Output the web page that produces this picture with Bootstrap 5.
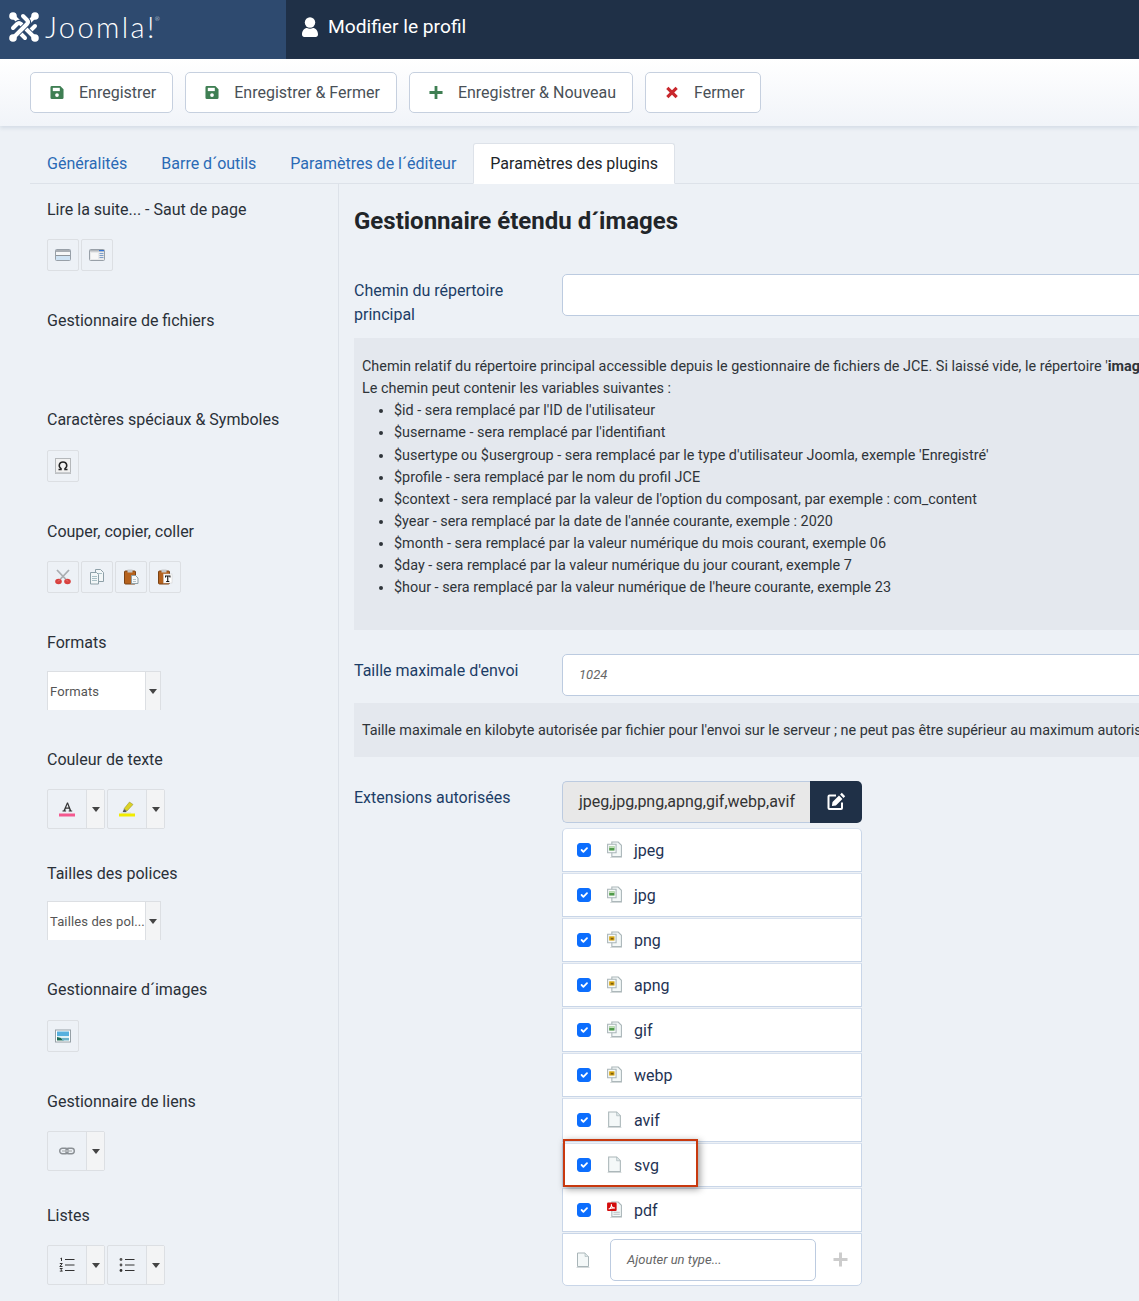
<!DOCTYPE html>
<html lang="fr">
<head>
<meta charset="utf-8">
<title>Modifier le profil</title>
<link href="https://cdn.jsdelivr.net/npm/bootstrap@5.3.0/dist/css/bootstrap.min.css" rel="stylesheet">
<style>
html,body{height:1301px;overflow:hidden}
body{background:#edf1f6;font-family:Roboto,"Liberation Sans",sans-serif;font-size:16px;color:#212529;position:relative}
.top-bar{height:59px;background:#1f3047;color:#fff}
.brand-box{width:286px;height:59px;background:#2e4a6f;padding:0 0 6px 9px}
.title-box{height:59px;padding:0 0 6px 16px}
.brand-word{font-family:Lato,"Liberation Sans",sans-serif;font-weight:300;font-size:29px;letter-spacing:2.4px;line-height:1;margin-left:6px;margin-top:-1px}
.brand-r{font-size:6px;letter-spacing:0;position:relative;top:4px;left:-2px;vertical-align:top}
.page-name{font-size:19.2px;margin-left:10px;margin-top:2px}
.tool-bar{height:67px;background:linear-gradient(#fff,#f1f4f9);box-shadow:0 2px 4px rgba(120,140,170,.22);padding:13px 0 0 30px;gap:12px;position:relative}
.tool-btn{height:41px;border:1px solid #c6d0df;border-radius:5px;background:#fff;color:#495057;font-size:16px;padding:0 16px 0 19px;display:flex;align-items:center;gap:15px}
.tool-btn:last-child{padding-right:15px}
.tool-btn svg{width:14px;height:15px;flex:none}
.tab-strip{padding:17px 0 0 0;margin-left:30px;border-bottom:1px solid #dde2e9;height:58px}
.tab-strip .nav-link{color:#2a6ab5;padding:8px 16px;height:41px;line-height:24px;border-radius:3px 3px 0 0;margin-bottom:-1px}
.tab-strip .nav-link.active{color:#212529;background:#fff;border-color:#dde2e9 #dde2e9 #fff}
.two-pane{height:1117px;padding-left:30px}
.side-pane{width:309px;flex:none;border-right:1px solid #dde2e9;padding:13px 0 0 17px}
.g-label{line-height:26px;height:24px;color:#2a3038}
.g99{height:99px}.g111{height:111px}.g112{height:112px}.g114{height:114px}.g116{height:116px}.g117{height:117px}
.tb-line{display:flex;gap:2px;margin-top:18px}
.tb-line.up1{margin-top:19px}
.tb-line.dn1{margin-top:17px}
.tb-line.dn2{margin-top:16px}
.ed-btn{width:32px;height:32px;border:1px solid #dcdfe3;border-radius:2px;display:flex;align-items:center;justify-content:center}
.ed-btn svg{width:16px;height:16px}
.split-btn{height:40px;border:1px solid #dcdfe3;border-radius:2px;display:flex}
.split-main{width:38px;display:flex;align-items:center;justify-content:center}
.split-main svg{width:16px;height:16px}
.split-arrow{width:18px;border-left:1px solid #dcdfe3;background:#f3f4f5;display:flex;align-items:center;justify-content:center}
.caret-d{width:0;height:0;border-left:4px solid transparent;border-right:4px solid transparent;border-top:5px solid #444}
.mce-select{width:114px;height:39px;display:flex;border-top:1px solid #dcdfe3;border-left:1px solid #dcdfe3;border-right:1px solid #dcdfe3;background:#fff;font-size:13px;letter-spacing:.12px;color:#555}
.mce-val{flex:1;padding:0 0 0 2px;line-height:40px;white-space:nowrap}
.mce-arrow{width:15px;border-left:1px solid #dcdfe3;background:#f3f4f5;display:flex;align-items:flex-start;justify-content:center;padding-top:17px}
.main-pane{padding:0 0 0 15px;width:1400px;flex:none}
.main-title{font-size:24px;font-weight:700;line-height:29px;margin:23px 0 38px;color:#212529}
.field-line{display:flex}
.field-label{width:208px;flex:none;color:#1c3d66;line-height:24px;padding-top:5px}
.wide-input{width:800px;height:42px;border:1px solid #bccbe0;border-radius:5px;background:#fff;font-style:italic;font-size:13px;color:#666;padding:0 16px;display:flex;align-items:center}
.help-box{background:#e4e8ee;width:1000px;padding:18px 8px 30px;font-size:14.4px;line-height:22.14px;white-space:nowrap;color:#2f3439;margin:11px 0 24px}
.help-box ul{margin:0;padding-left:32px}
.help-box.one{padding:17px 8px 15px;margin:7px 0 24px}
.ext-col{width:300px;flex:none}
.ext-group{height:42px;margin-bottom:5px}
.ext-value{flex:1;background:#e8e8e8;border:1px solid #bccbe0;border-right:0;border-radius:5px 0 0 5px;padding-left:16px;line-height:40px;color:#333}
.ext-edit{width:52px;background:#1f3047;border-radius:0 5px 5px 0;display:flex;align-items:center;justify-content:center}
.ext-edit svg{width:19px;height:19px}
.ext-item{height:44px;background:#fff;border:1px solid #c9d6e8;border-top-color:#d8e1ee;margin-bottom:1px;display:flex;align-items:center;padding-left:14px;color:#1f3354}
.ext-item:first-child{border-radius:5px 5px 0 0}
.ext-item .form-check-input{width:14px;height:14px;margin:0;flex:none;border-radius:3px}
.ext-item svg{width:17px;height:17px;margin-left:15px;margin-right:11px;flex:none}
.ext-name{margin-top:2px}
.ext-add{height:53px;background:#fff;border:1px solid #c9d6e8;border-radius:0 0 5px 5px;display:flex;align-items:center;padding:1px 0 0 12px;margin-top:1px}
.ext-add svg.pg{width:16px;height:16px;flex:none}
.ext-add .add-input{width:206px;height:42px;margin-left:19px;border:1px solid #bccbe0;border-radius:5px;font-style:italic;font-size:13px;color:#666;padding:0 16px;display:flex;align-items:center}
.ext-add svg.pl{width:15px;height:15px;margin-left:17px;flex:none}
.mark-box{position:absolute;left:563px;top:1139px;width:135px;height:48px;border:2px solid #c8390f;box-shadow:2px 2px 7px rgba(0,0,0,.4);pointer-events:none}
</style>
</head>
<body>
<svg class="d-none" xmlns="http://www.w3.org/2000/svg">
<defs>
<symbol id="i-save" viewBox="0 0 15 15"><path fill="#3f7f53" d="M2 0.5h9l3.500 3.500v9a1.500 1.500 0 0 1-1.500 1.500H2a1.500 1.500 0 0 1-1.500-1.500V2A1.500 1.500 0 0 1 2 .5z"/><rect x="3" y="2.500" width="7.500" height="3.500" fill="#fff"/><circle cx="7.500" cy="10.300" r="2" fill="#fff"/></symbol>
<symbol id="i-plus" viewBox="0 0 15 15"><path fill="#3f7f53" d="M6 .5h3v5.500h5.500v3H9v5.500H6V9H.5V6H6z"/></symbol>
<symbol id="i-x" viewBox="0 0 15 15"><path stroke="#c9282d" stroke-width="3.400" fill="none" d="M2.500 2.500l10 10m0-10l-10 10"/></symbol>
<symbol id="i-page" viewBox="0 0 16 16"><path fill="#f4f8f8" stroke="#a9b5b8" d="M2.500 1h7.500l3.500 3.500V14.500H2.500z"/><path fill="#dbe5e6" stroke="#a9b5b8" stroke-width=".6" d="M10 1v3.500h3.500"/><rect x="1.500" y="15" width="13" height="1" fill="#d4d9da"/></symbol>
<symbol id="i-img" viewBox="0 0 16 16"><path fill="#f4f8f8" stroke="#a9b5b8" d="M5.500 1h6l3 3v10.500h-9z"/><path fill="#f7fafa" stroke="#a9b5b8" d="M1.500 3h8v8h-8z"/><rect x="3" y="5" width="5" height="4" fill="#4f9a4a"/><rect x="3" y="5" width="5" height="1.500" fill="#cfe6c4"/><rect x="4" y="15" width="11" height="1" fill="#d4d9da"/></symbol>
<symbol id="i-imgy" viewBox="0 0 16 16"><path fill="#f4f8f8" stroke="#a9b5b8" d="M5.500 1h6l3 3v10.500h-9z"/><path fill="#f7fafa" stroke="#a9b5b8" d="M1.500 3h8v8h-8z"/><rect x="3" y="5" width="5" height="4" fill="#d6a511"/><rect x="4.500" y="6.500" width="2.500" height="1.500" fill="#7a5a10"/><rect x="4" y="15" width="11" height="1" fill="#d4d9da"/></symbol>
<symbol id="i-pdf" viewBox="0 0 16 16"><path fill="#f4f8f8" stroke="#a9b5b8" d="M5.500 1h6l3 3v10.500h-9z"/><path stroke="#b8c0c2" d="M7 10.500h6M7 12.500h6"/><rect x="1" y="1.500" width="9" height="8" rx="1" fill="#d40c0c"/><path stroke="#fff" stroke-width="1" fill="none" d="M2.500 7.500c2-.5 3-3 2.500-4.500 0 2 1.500 3.500 3.500 3.500-1.500 0-4 0-6 1z"/><rect x="4" y="15" width="11" height="1" fill="#d4d9da"/></symbol>
<symbol id="i-break" viewBox="0 0 16 16"><rect x=".5" y="2.500" width="15" height="11" rx="1" fill="#cfe3f4" stroke="#98a0a8"/><rect x="1" y="3" width="14" height="2" fill="#a8adb3"/><rect x="1" y="5" width="14" height="3" fill="#f6f7f8"/><rect x="1" y="8" width="14" height="1" fill="#8f959b"/></symbol>
<symbol id="i-pagebr" viewBox="0 0 16 16"><rect x=".5" y="2.500" width="15" height="11" rx="1" fill="#e8e9ea" stroke="#98a0a8"/><rect x="1" y="3" width="14" height="1.500" fill="#b3b7bb"/><rect x="10" y="3" width="5" height="1.200" fill="#2f72d6"/><rect x="10.500" y="6" width="4" height="1" fill="#7f9fc9"/><rect x="10.500" y="8" width="4" height="1" fill="#7f9fc9"/><rect x="10.500" y="10" width="4" height="1" fill="#7f9fc9"/><rect x="2" y="6" width="7" height="6" fill="#f7f7f7"/></symbol>
<symbol id="i-cut" viewBox="0 0 16 16"><path stroke="#a9adb1" stroke-width="1.800" fill="none" d="M2 1L11 10.500M14 1L5 10.500"/><ellipse cx="3.500" cy="12.500" rx="3.300" ry="2.800" fill="#d8413f"/><ellipse cx="12.500" cy="12.500" rx="3.300" ry="2.800" fill="#d8413f"/><path stroke="#e67c7a" d="M5 10.500l-2 2M11 10.500l2 2"/></symbol>
<symbol id="i-copy" viewBox="0 0 16 16"><path fill="#f3f7f8" stroke="#8ea0a8" d="M6.500 .5h5l3 3v9h-8z"/><path fill="#f3f7f8" stroke="#8ea0a8" d="M1.500 3.500h6l2 2v9.500h-8z"/><path stroke="#a9c0c6" d="M3 7.500h5M3 9.500h5M3 11.500h5M9 4.500h4"/></symbol>
<symbol id="i-paste" viewBox="0 0 16 16"><rect x="1.500" y="2" width="11" height="13" rx="1" fill="#b5621e" stroke="#7b4214"/><rect x="4.500" y=".5" width="5" height="3" fill="#c7c9cb"/><path fill="#f6f8f9" stroke="#8ea0a8" d="M8.500 6.500h4l2.500 2.500v5.500H8.500z"/><path stroke="#b4c2c7" d="M10 10.500h3M10 12.500h3"/></symbol>
<symbol id="i-pastet" viewBox="0 0 16 16"><rect x="1.500" y="2" width="11" height="13" rx="1" fill="#b5621e" stroke="#7b4214"/><rect x="4.500" y=".5" width="5" height="3" fill="#c7c9cb"/><rect x="6.500" y="5" width="8.500" height="9" fill="#fff" stroke="#ccc" stroke-width=".5"/><path fill="#111" d="M8 6.500h5.500v2h-1v-1h-1.200v4.500h1v1H9.200v-1h1V7.500H9v1H8z"/></symbol>
<symbol id="i-omega" viewBox="0 0 16 16"><rect x=".5" y=".5" width="15" height="15" fill="#f1f1f1" stroke="#b5b8bb"/><path fill="none" stroke="#222" stroke-width="1.500" d="M3.500 11.500h2.500v-1c-3-2-2-6.500 2-6.500s5 4.500 2 6.500v1h2.500"/><rect x=".5" y="14" width="15" height="1.500" fill="#c9cccf"/></symbol>
<symbol id="i-fc" viewBox="0 0 16 16"><path fill="#333" d="M8 1.500h1l3.200 8h1v1H9.700v-1h.9l-.6-1.800H6.800l-.7 1.800h1v1H3.500v-1h1zM7.200 6.500H9.600L8.400 3.300z"/><rect y="12.500" width="16" height="3" fill="#f4588f"/></symbol>
<symbol id="i-hl" viewBox="0 0 16 16"><path fill="#dcd224" stroke="#8d8a2a" stroke-width=".5" d="M10.500 1l3.500 2.500-6 6.500-3-2.300z"/><path fill="#555" d="M5 8l2.800 2.300-1.300 1-2.800-.3z"/><rect x="2" y="11.500" width="10" height="1" fill="#d6d9dc"/><rect y="12.500" width="16" height="3" fill="#f1ec00"/></symbol>
<symbol id="i-pic" viewBox="0 0 16 16"><rect x=".5" y="2" width="15" height="12" fill="#fff" stroke="#96a0a6"/><rect x="2" y="3.500" width="12" height="4.500" fill="#57b0de"/><rect x="2" y="8" width="12" height="2" fill="#dff1f6"/><path fill="#1f6b55" d="M2 9l4 1 3 2.500H2z"/><rect x="7" y="10" width="7" height="2.500" fill="#6fb3c9"/></symbol>
<symbol id="i-link" viewBox="0 0 16 16"><rect x=".7" y="5.300" width="8.500" height="5.400" rx="2.700" fill="none" stroke="#8a8f94" stroke-width="1.400"/><rect x="6.800" y="5.300" width="8.500" height="5.400" rx="2.700" fill="none" stroke="#8a8f94" stroke-width="1.400"/><rect x="3" y="7.300" width="10" height="1.400" fill="#b5b9bc"/></symbol>
<symbol id="i-ol" viewBox="0 0 16 16"><path stroke="#333" d="M6 2.500h9.500M6 8h9.500M6 13.500h9.500"/><path stroke="#333" fill="none" d="M1.500 1.500l1-.5v3M.8 6.500h2.500l-2.500 3h2.700M.8 11.500h2.500l-1.300 1.300 1.300 1.300H.8"/></symbol>
<symbol id="i-ul" viewBox="0 0 16 16"><path stroke="#333" d="M6 2.500h9.500M6 8h9.500M6 13.500h9.500"/><circle cx="2" cy="2.500" r="1.400" fill="#555"/><circle cx="2" cy="8" r="1.400" fill="#555"/><circle cx="2" cy="13.500" r="1.400" fill="#333"/></symbol>
<symbol id="i-edit" viewBox="0 0 19 19"><path fill="none" stroke="#fff" stroke-width="2" stroke-linejoin="round" d="M9 3.500H2.500a1 1 0 0 0-1 1V16a1 1 0 0 0 1 1H14a1 1 0 0 0 1-1v-5.500"/><path fill="#fff" d="M14.800 .8l3.400 3.400-1.700 1.700-3.400-3.400zM12 3.600l3.400 3.400-6.500 6.500-4 .6.600-4z"/></symbol>
<symbol id="i-user" viewBox="0 0 16 20"><circle cx="8" cy="5.500" r="5.200" fill="#fff"/><path fill="#fff" d="M0 17.500c0-4 2.500-6.500 5-6.500.9.500 1.900.8 3 .8s2.100-.3 3-.8c2.500 0 5 2.500 5 6.500 0 1.500-1 2.500-2.200 2.500H2.200C1 20 0 19 0 17.500z"/></symbol>
<symbol id="i-joomla" viewBox="0 0 30 30"><g fill="none" stroke-linecap="round"><path stroke="#2e4a6f" stroke-width="6" d="M9 9l9 9q2 2 4 0l4-4"/><path stroke="#fff" stroke-width="4" d="M5 5l13 13q2 2 4 0l4-4"/><circle cx="4" cy="4" r="3.800" fill="#fff" stroke="none"/></g></symbol>
</defs>
</svg>

<header class="top-bar d-flex">
  <div class="brand-box d-flex align-items-center">
    <svg width="30" height="30" viewBox="0 0 30 30" aria-hidden="true">
      <use href="#i-joomla"/>
      <g transform="rotate(90 15 15)"><use href="#i-joomla"/></g>
      <g transform="rotate(180 15 15)"><use href="#i-joomla"/></g>
      <g transform="rotate(270 15 15)"><use href="#i-joomla"/></g>
    </svg>
    <span class="brand-word">Joomla!<span class="brand-r">®</span></span>
  </div>
  <div class="title-box d-flex align-items-center">
    <svg width="16" height="20" aria-hidden="true"><use href="#i-user"/></svg>
    <span class="page-name">Modifier le profil</span>
  </div>
</header>

<div class="tool-bar d-flex align-items-start">
  <button class="tool-btn" type="button"><svg><use href="#i-save"/></svg>Enregistrer</button>
  <button class="tool-btn" type="button"><svg><use href="#i-save"/></svg>Enregistrer &amp; Fermer</button>
  <button class="tool-btn" type="button"><svg><use href="#i-plus"/></svg>Enregistrer &amp; Nouveau</button>
  <button class="tool-btn" type="button"><svg><use href="#i-x"/></svg>Fermer</button>
</div>

<ul class="nav nav-tabs tab-strip">
  <li class="nav-item"><a class="nav-link" href="#">Généralités</a></li>
  <li class="nav-item"><a class="nav-link" href="#">Barre d´outils</a></li>
  <li class="nav-item"><a class="nav-link" href="#">Paramètres de l´éditeur</a></li>
  <li class="nav-item"><a class="nav-link active" href="#">Paramètres des plugins</a></li>
</ul>

<div class="two-pane d-flex">
  <aside class="side-pane">
    <div class="g111"><div class="g-label">Lire la suite... - Saut de page</div>
      <div class="tb-line"><div class="ed-btn"><svg><use href="#i-break"/></svg></div><div class="ed-btn"><svg><use href="#i-pagebr"/></svg></div></div></div>
    <div class="g99"><div class="g-label">Gestionnaire de fichiers</div></div>
    <div class="g112"><div class="g-label">Caractères spéciaux &amp; Symboles</div>
      <div class="tb-line up1"><div class="ed-btn"><svg><use href="#i-omega"/></svg></div></div></div>
    <div class="g111"><div class="g-label">Couper, copier, coller</div>
      <div class="tb-line"><div class="ed-btn"><svg><use href="#i-cut"/></svg></div><div class="ed-btn"><svg><use href="#i-copy"/></svg></div><div class="ed-btn"><svg><use href="#i-paste"/></svg></div><div class="ed-btn"><svg><use href="#i-pastet"/></svg></div></div></div>
    <div class="g117"><div class="g-label">Formats</div>
      <div class="tb-line dn1"><div class="mce-select"><div class="mce-val">Formats</div><div class="mce-arrow"><span class="caret-d"></span></div></div></div></div>
    <div class="g114"><div class="g-label">Couleur de texte</div>
      <div class="tb-line"><div class="split-btn"><div class="split-main"><svg><use href="#i-fc"/></svg></div><div class="split-arrow"><span class="caret-d"></span></div></div><div class="split-btn"><div class="split-main"><svg><use href="#i-hl"/></svg></div><div class="split-arrow"><span class="caret-d"></span></div></div></div></div>
    <div class="g116"><div class="g-label">Tailles des polices</div>
      <div class="tb-line dn2"><div class="mce-select"><div class="mce-val">Tailles des pol...</div><div class="mce-arrow"><span class="caret-d"></span></div></div></div></div>
    <div class="g112"><div class="g-label">Gestionnaire d´images</div>
      <div class="tb-line up1"><div class="ed-btn"><svg><use href="#i-pic"/></svg></div></div></div>
    <div class="g114"><div class="g-label">Gestionnaire de liens</div>
      <div class="tb-line"><div class="split-btn"><div class="split-main"><svg><use href="#i-link"/></svg></div><div class="split-arrow"><span class="caret-d"></span></div></div></div></div>
    <div class="g114"><div class="g-label">Listes</div>
      <div class="tb-line"><div class="split-btn"><div class="split-main"><svg><use href="#i-ol"/></svg></div><div class="split-arrow"><span class="caret-d"></span></div></div><div class="split-btn"><div class="split-main"><svg><use href="#i-ul"/></svg></div><div class="split-arrow"><span class="caret-d"></span></div></div></div></div>
  </aside>

  <main class="main-pane">
    <h2 class="main-title">Gestionnaire étendu d´images</h2>
    <div class="field-line">
      <label class="field-label">Chemin du répertoire principal</label>
      <div class="wide-input"></div>
    </div>
    <div class="help-box">
      Chemin relatif du répertoire principal accessible depuis le gestionnaire de fichiers de JCE. Si laissé vide, le répertoire '<strong>images</strong>' sera utilisé.<br>
      Le chemin peut contenir les variables suivantes :
      <ul>
        <li>$id - sera remplacé par l'ID de l'utilisateur</li>
        <li>$username - sera remplacé par l'identifiant</li>
        <li>$usertype ou $usergroup - sera remplacé par le type d'utilisateur Joomla, exemple 'Enregistré'</li>
        <li>$profile - sera remplacé par le nom du profil JCE</li>
        <li>$context - sera remplacé par la valeur de l'option du composant, par exemple : com_content</li>
        <li>$year - sera remplacé par la date de l'année courante, exemple : 2020</li>
        <li>$month - sera remplacé par la valeur numérique du mois courant, exemple 06</li>
        <li>$day - sera remplacé par la valeur numérique du jour courant, exemple 7</li>
        <li>$hour - sera remplacé par la valeur numérique de l'heure courante, exemple 23</li>
      </ul>
    </div>
    <div class="field-line">
      <label class="field-label">Taille maximale d'envoi</label>
      <div class="wide-input">1024</div>
    </div>
    <div class="help-box one">Taille maximale en kilobyte autorisée par fichier pour l'envoi sur le serveur ; ne peut pas être supérieur au maximum autorisé par le serveur.</div>
    <div class="field-line">
      <label class="field-label">Extensions autorisées</label>
      <div class="ext-col">
        <div class="ext-group d-flex">
          <div class="ext-value">jpeg,jpg,png,apng,gif,webp,avif</div>
          <div class="ext-edit"><svg><use href="#i-edit"/></svg></div>
        </div>
        <div>
          <div class="ext-item"><input class="form-check-input" type="checkbox" checked aria-label="jpeg"><svg><use href="#i-img"/></svg><span class="ext-name">jpeg</span></div>
          <div class="ext-item"><input class="form-check-input" type="checkbox" checked aria-label="jpg"><svg><use href="#i-img"/></svg><span class="ext-name">jpg</span></div>
          <div class="ext-item"><input class="form-check-input" type="checkbox" checked aria-label="png"><svg><use href="#i-imgy"/></svg><span class="ext-name">png</span></div>
          <div class="ext-item"><input class="form-check-input" type="checkbox" checked aria-label="apng"><svg><use href="#i-imgy"/></svg><span class="ext-name">apng</span></div>
          <div class="ext-item"><input class="form-check-input" type="checkbox" checked aria-label="gif"><svg><use href="#i-img"/></svg><span class="ext-name">gif</span></div>
          <div class="ext-item"><input class="form-check-input" type="checkbox" checked aria-label="webp"><svg><use href="#i-imgy"/></svg><span class="ext-name">webp</span></div>
          <div class="ext-item"><input class="form-check-input" type="checkbox" checked aria-label="avif"><svg><use href="#i-page"/></svg><span class="ext-name">avif</span></div>
          <div class="ext-item"><input class="form-check-input" type="checkbox" checked aria-label="svg"><svg><use href="#i-page"/></svg><span class="ext-name">svg</span></div>
          <div class="ext-item"><input class="form-check-input" type="checkbox" checked aria-label="pdf"><svg><use href="#i-pdf"/></svg><span class="ext-name">pdf</span></div>
          <div class="ext-add"><svg class="pg"><use href="#i-page"/></svg><div class="add-input">Ajouter un type...</div><svg class="pl" viewBox="0 0 15 15"><path fill="#ccc" d="M6 .5h3v5.500h5.500v3H9v5.500H6V9H.5V6H6z"/></svg></div>
        </div>
      </div>
    </div>
  </main>
</div>
<div class="mark-box"></div>
</body>
</html>
